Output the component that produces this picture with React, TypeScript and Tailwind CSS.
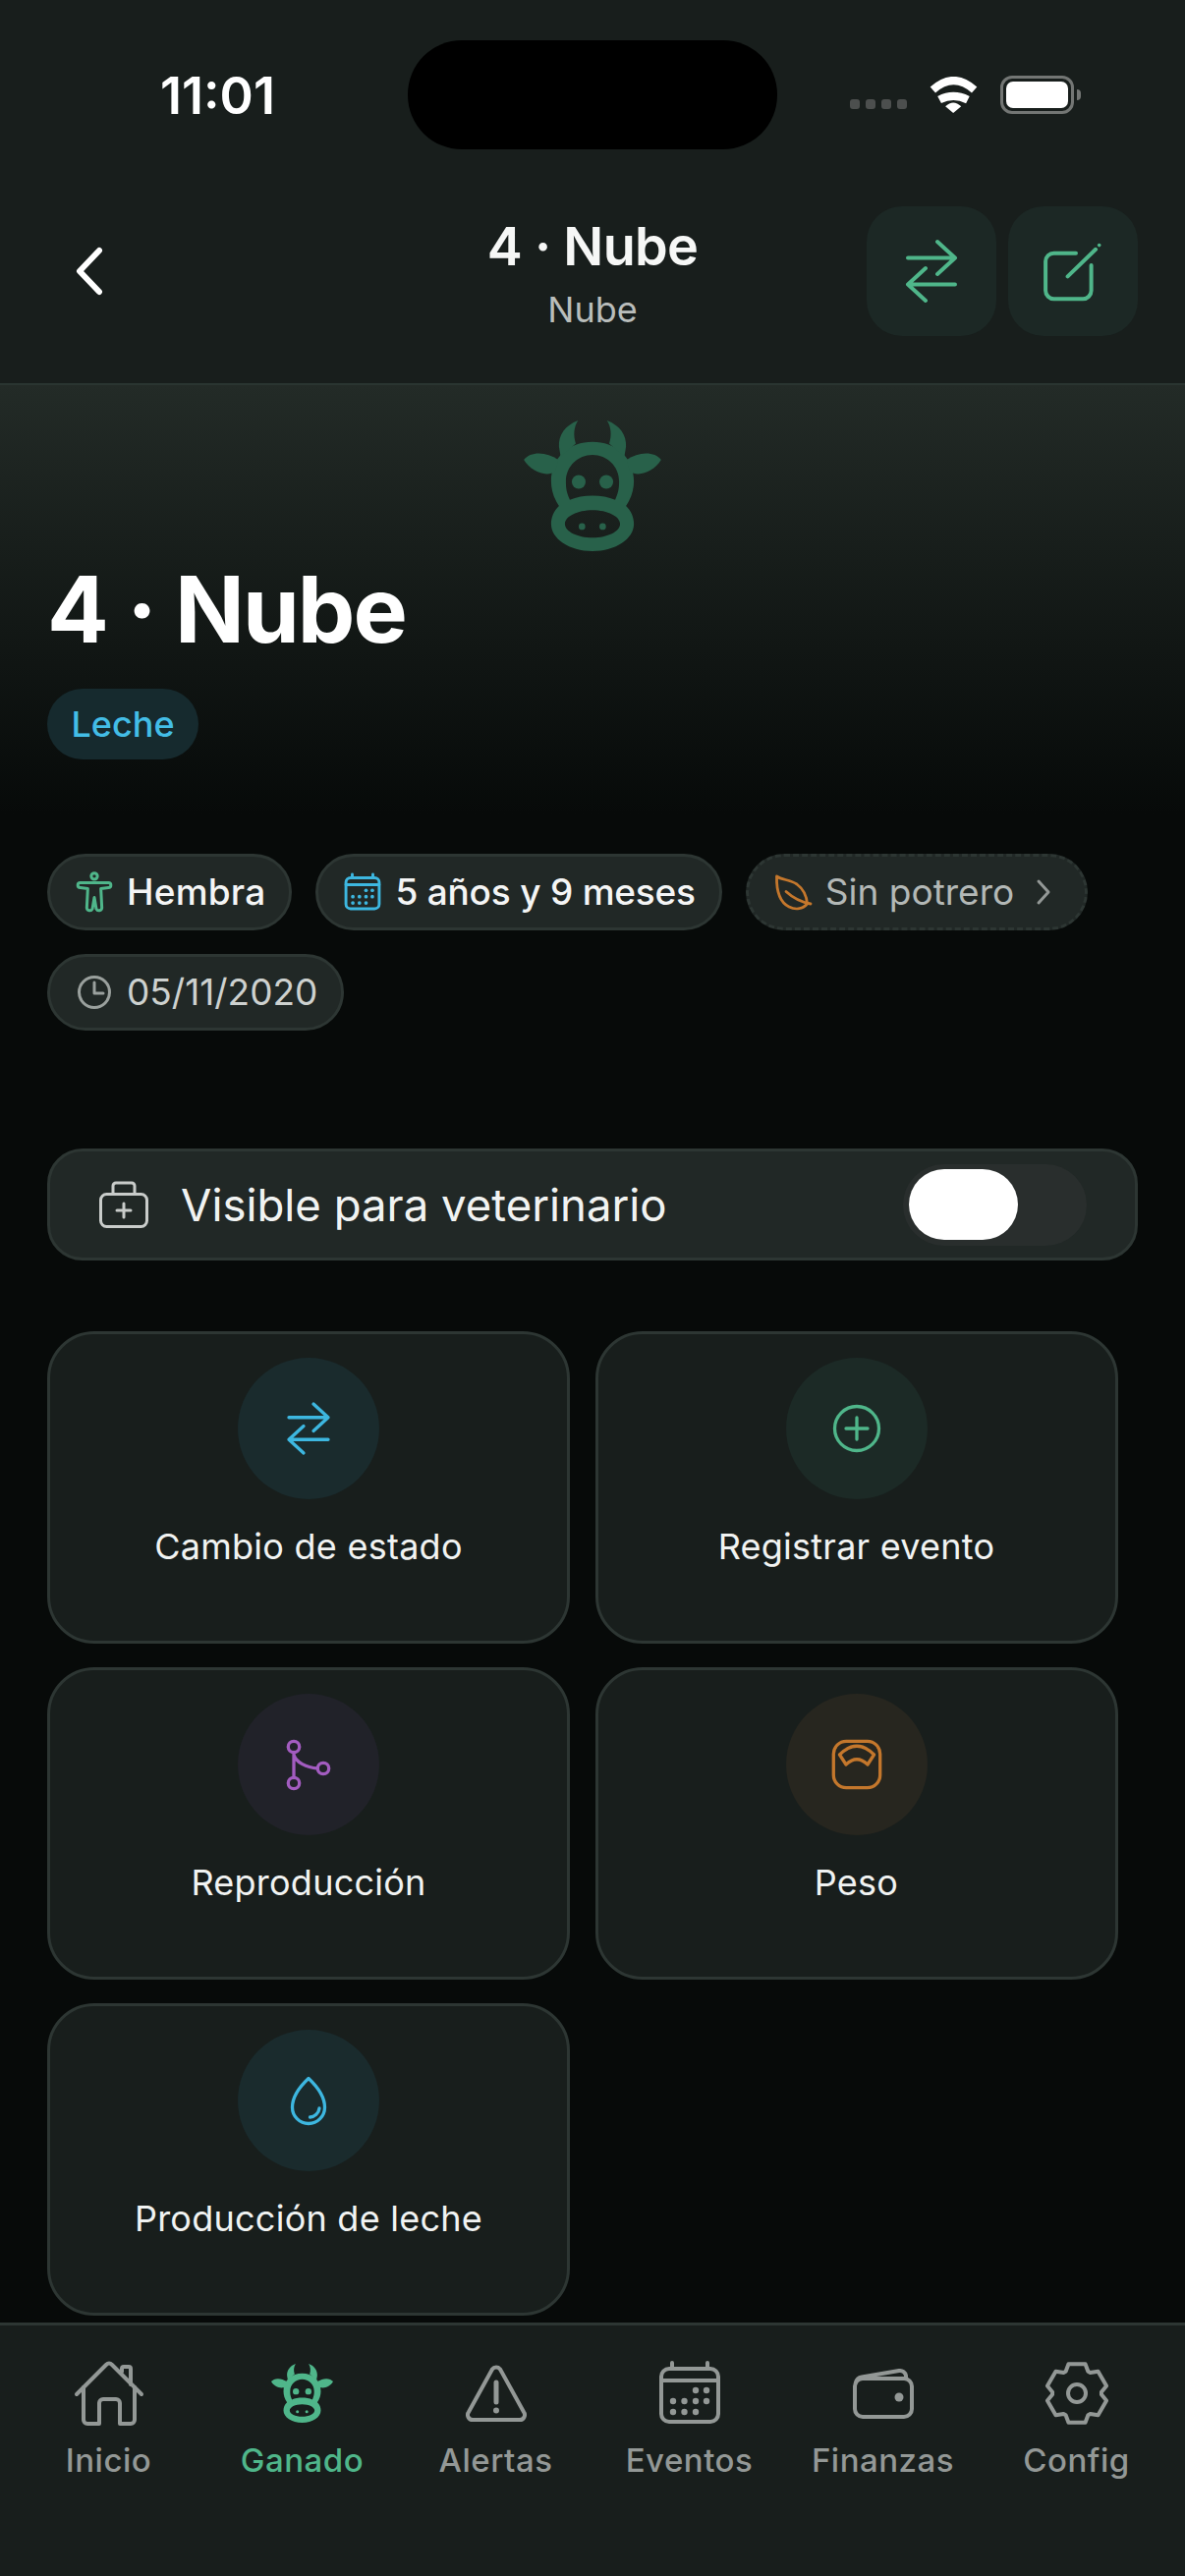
const green = '#4fb68a'
const blue = '#3db7e0'
const purple = '#a35cc0'
const orange = '#c4772c'
const gray = '#939896'

function Cow({ color, className }: { color: string; className: string }) {
  return (
    <svg viewBox="100 85 418 398" className={className} fill={color}>
      <path
        fillRule="evenodd"
        d="M207 345C190 320 183 295 183 270C183 195 240 150 309 150C378 150 435 195 435 270C435 295 428 320 411 345C427 360 435 380 435 400C435 445 380 483 309 483C238 483 183 445 183 400C183 380 191 360 207 345ZM240 327C228 300 228 285 228 270C228 225 265 190 309 190C353 190 390 225 390 270C390 285 390 300 378 327C340 310 278 310 240 327ZM225 400C225 423 263 442 309 442C355 442 393 423 393 400C393 377 355 358 309 358C263 358 225 377 225 400Z"
      />
      <circle cx="267" cy="272" r="21" />
      <circle cx="351" cy="272" r="21" />
      <circle cx="277" cy="408" r="10" />
      <circle cx="340" cy="408" r="10" />
      <path d="M265 85C225 100 205 130 207 165L212 195L258 155C250 130 252 105 265 85Z" />
      <path d="M353 85C393 100 413 130 411 165L406 195L360 155C368 130 366 105 353 85Z" />
      <path d="M205 205C170 180 120 178 100 205C120 240 170 260 195 240Z" />
      <path d="M413 205C448 180 498 178 518 205C498 240 448 260 423 240Z" />
    </svg>
  )
}

function Swap({ color, size, width }: { color: string; size: number; width: number }) {
  return (
    <svg viewBox="0 0 24 24" width={size} height={size} fill="none" stroke={color} strokeWidth={width} strokeLinecap="round" strokeLinejoin="round">
      <path d="M4 7.5h16M14 2l6 5.5-6 5.5M20 16.5H4M10 11l-6 5.5 6 5.5" />
    </svg>
  )
}

function CalendarIcon({ color, size, width }: { color: string; size: number; width: number }) {
  const dots = [
    [42, 33], [53, 33],
    [19, 44], [30.5, 44], [42, 44], [53, 44],
    [19, 55], [30.5, 55], [42, 55],
  ]
  return (
    <svg viewBox="0 0 72 72" width={size} height={size} fill="none" stroke={color} strokeWidth={width} strokeLinecap="round">
      <rect x="7" y="11" width="58" height="54" rx="8" />
      <path d="M7 23H65M18 5V10M54 5V10" />
      {dots.map(([x, y]) => (
        <circle key={`${x}-${y}`} cx={x} cy={y} r="3.2" fill={color} stroke="none" />
      ))}
    </svg>
  )
}

// six flat teeth around the centre of a 72 box
function gearPath() {
  const pt = (deg: number, r: number) => {
    const a = (deg * Math.PI) / 180
    return `${(36 + r * Math.cos(a)).toFixed(2)} ${(36 + r * Math.sin(a)).toFixed(2)}`
  }
  const parts: string[] = []
  for (let i = 0; i < 6; i++) {
    const a = -90 + 60 * i
    parts.push(pt(a - 27, 25), pt(a - 16, 31), pt(a + 16, 31), pt(a + 27, 25))
  }
  return `M${parts.join('L')}Z`
}

function NavIcon({ name }: { name: string }) {
  const props = {
    viewBox: '0 0 72 72',
    width: 72,
    height: 72,
    fill: 'none',
    stroke: gray,
    strokeWidth: 4,
    strokeLinecap: 'round' as const,
    strokeLinejoin: 'round' as const,
  }
  if (name === 'Inicio')
    return (
      <svg {...props}>
        <path d="M3 37L33 7Q36 4 39 7L69 37" />
        <path d="M10 30V63a4 4 0 0 0 4 4H26V46a4 4 0 0 1 4-4H43a4 4 0 0 1 4 4V67H58a4 4 0 0 0 4-4V30" />
        <path d="M49 14V11a2 2 0 0 1 2-2H56a2 2 0 0 1 2 2V27" />
      </svg>
    )
  if (name === 'Ganado')
    return (
      <div className="flex h-[72px] w-[72px] items-center justify-center">
        <Cow color={green} className="h-[60px] w-[63px]" />
      </div>
    )
  if (name === 'Alertas')
    return (
      <svg {...props}>
        <path d="M32 11.5a5 5 0 0 1 8 0L64 55a5 5 0 0 1-4 8H12a5 5 0 0 1-4-8Z" />
        <path d="M36 25V45" strokeWidth="5" />
        <circle cx="36" cy="53.5" r="3" fill={gray} stroke="none" />
      </svg>
    )
  if (name === 'Eventos') return <CalendarIcon color={gray} size={72} width={4} />
  if (name === 'Finanzas')
    return (
      <svg {...props}>
        <rect x="7" y="21" width="58" height="39" rx="8" />
        <path d="M8 25C9 21 11 20 14 19.5L52 13a6 6 0 0 1 7 5V21" />
        <circle cx="52" cy="40" r="4.5" fill={gray} stroke="none" />
      </svg>
    )
  return (
    <svg {...props}>
      <path d={gearPath()} />
      <circle cx="36" cy="36" r="9" />
    </svg>
  )
}

function Chip({ icon, label, textClass, dashed }: { icon: React.ReactNode; label: string; textClass: string; dashed?: boolean }) {
  return (
    <div
      className={`flex h-[78px] items-center gap-3 rounded-full border-[3px] border-[#2d3633] bg-[#212826] px-6 text-[37px] ${textClass} ${dashed ? 'border-dashed' : ''}`}
    >
      {icon}
      <span>{label}</span>
      {dashed && (
        <svg viewBox="0 0 36 36" width={36} height={36} fill="none" stroke={gray} strokeWidth="3" strokeLinecap="round" strokeLinejoin="round">
          <path d="M13 7L23 18L13 29" />
        </svg>
      )}
    </div>
  )
}

function ActionCard({ icon, label, circleClass }: { icon: React.ReactNode; label: string; circleClass: string }) {
  return (
    <div className="flex h-[318px] flex-col items-center rounded-[48px] border-[3px] border-[#2d3633] bg-[#181e1c] pt-6">
      <div className={`flex h-[144px] w-[144px] items-center justify-center rounded-full ${circleClass}`}>{icon}</div>
      <span className="mt-[25px] text-[36px] leading-[46px] font-normal tracking-[0.25px] text-[#f1f3f2]">{label}</span>
    </div>
  )
}

function CardSvg({ color, children }: { color: string; children: React.ReactNode }) {
  return (
    <svg viewBox="0 0 60 60" width={60} height={60} fill="none" stroke={color} strokeWidth="3.3" strokeLinecap="round" strokeLinejoin="round">
      {children}
    </svg>
  )
}

const navItems = ['Inicio', 'Ganado', 'Alertas', 'Eventos', 'Finanzas', 'Config']

export default function App() {
  return (
    <div className="flex h-[2622px] w-[1206px] flex-col overflow-hidden bg-[#070a09] [font-family:Inter,sans-serif]">
      {/* Header */}
      <header className="h-[392px] shrink-0 border-b-2 border-[#2a3531] bg-[#181e1c]">
        <div className="flex h-[111px] translate-y-[41px] items-center">
          <div className="w-[415px] pt-[2px] pl-7 text-center text-[52px] font-semibold text-white">11:01</div>
          <div className="h-[111px] w-[376px] rounded-[55px] bg-black" />
          <div className="flex items-center gap-[22px] pl-[74px]">
            <div className="mt-[19px] flex gap-[6px]">
              <div className="h-[10px] w-[10px] rounded-[3px] bg-[#4c4f4e]" />
              <div className="h-[10px] w-[10px] rounded-[3px] bg-[#4c4f4e]" />
              <div className="h-[10px] w-[10px] rounded-[3px] bg-[#4c4f4e]" />
              <div className="h-[10px] w-[10px] rounded-[3px] bg-[#4c4f4e]" />
            </div>
            <svg viewBox="315 118 152 110" width={51} height={37} fill="none" stroke="#fff">
              <path d="M328 158Q391 102 454 158" strokeWidth="24" />
              <path d="M348 188Q390 166 434 188" strokeWidth="24" />
              <path d="M366 208Q390 185 414 208L390 228Z" fill="#fff" stroke="none" />
            </svg>
            <div className="flex items-center gap-[3px]">
              <div className="flex h-[39px] w-[75px] items-center rounded-[12px] border-[3px] border-[#737674] p-[3px]">
                <div className="h-full w-full rounded-[7px] bg-white" />
              </div>
              <div className="h-[11px] w-[4px] rounded-r-full bg-[#737674]" />
            </div>
          </div>
        </div>
        <div className="mt-[99px] grid h-[132px] grid-cols-[1fr_auto_1fr] items-center px-12">
          <svg viewBox="0 0 36 54" width={36} height={54} fill="none" stroke="#fff" strokeWidth="6" strokeLinecap="round" strokeLinejoin="round" className="ml-[27px]">
            <path d="M26 6L6 27L26 48" />
          </svg>
          <div className="flex flex-col items-center pt-[3px]">
            <span className="text-[54px] leading-[64px] font-semibold tracking-[-0.7px] text-[#f6f7f6]">4 · Nube</span>
            <span className="mt-[10px] text-[36px] leading-[44px] text-[#b9bdbb]">Nube</span>
          </div>
          <div className="flex justify-end gap-3">
            <div className="flex h-[132px] w-[132px] items-center justify-center rounded-[36px] bg-[#1c2825]">
              <Swap color={green} size={72} width={1.33} />
            </div>
            <div className="flex h-[132px] w-[132px] items-center justify-center rounded-[36px] bg-[#1c2825]">
              <svg viewBox="0 0 24 24" width={72} height={72} fill="none" stroke={green} strokeWidth="1.33" strokeLinecap="round" strokeLinejoin="round">
                <path d="M13 5.9H5.5a2.8 2.8 0 0 0-2.8 2.8v9.9a2.8 2.8 0 0 0 2.8 2.8h9.9a2.8 2.8 0 0 0 2.8-2.8V10" />
                <path d="M10.2 13.8L19.7 4.6" />
                <circle cx="20.9" cy="3.2" r=".6" fill={green} stroke="none" />
              </svg>
            </div>
          </div>
        </div>
      </header>

      <main className="min-h-0 flex-1 overflow-hidden">
        {/* Hero */}
        <section className="h-[438px] bg-gradient-to-b from-[#232b27] to-[#070a09] px-12 pt-9">
          <div className="flex justify-center">
            <Cow color="#28614a" className="h-[133px] w-[140px]" />
          </div>
          <h1 className="mt-[9px] text-[93px] leading-[100px] font-bold tracking-[-2px] text-white">4 · Nube</h1>
          <div className="mt-[31px] flex h-[72px] w-[154px] items-center justify-center rounded-full bg-[#162a2e] text-[36px] font-medium text-[#43bde6]">
            Leche
          </div>
        </section>

        <section className="mt-[39px] flex flex-wrap gap-x-6 gap-y-6 px-12">
          <Chip
            label="Hembra"
            textClass="font-medium tracking-[0.2px] text-[#f4f5f5]"
            icon={
              <svg viewBox="135 111 126 128" width={42} height={43} fill="none" stroke={green} strokeWidth="9" strokeLinecap="round" strokeLinejoin="round">
                <circle cx="198" cy="125" r="9.5" />
                <path d="M155 145H241a7.5 7.5 0 0 1 0 15L218 163L221 222a9 9 0 0 1-17 3L198 190L192 225a9 9 0 0 1-17-3L178 163L155 160a7.5 7.5 0 0 1 0-15Z" />
              </svg>
            }
          />
          <Chip
            label="5 años y 9 meses"
            textClass="font-medium tracking-[-0.2px] text-[#f4f5f5]"
            icon={<CalendarIcon color={blue} size={42} width={5} />}
          />
          <Chip
            dashed
            label="Sin potrero"
            textClass="text-[#b3b8b6]"
            icon={
              <svg viewBox="0 0 42 42" width={42} height={42} fill="none" stroke={orange} strokeWidth="2.8" strokeLinecap="round" strokeLinejoin="round">
                <path d="M4.5 5C10 9 18 8 25 13C31 17.5 35 25 35.5 33C31 38 24 39.5 17 36C9 32 4 24 4.5 5Z" />
                <path d="M14 20.5C20 26 28 31 39 33" />
              </svg>
            }
          />
          <Chip
            label="05/11/2020"
            textClass="text-[#cdd1cf]"
            icon={
              <svg viewBox="0 0 42 42" width={42} height={42} fill="none" stroke="#9aa09d" strokeWidth="3" strokeLinecap="round" strokeLinejoin="round">
                <circle cx="21" cy="21" r="15.5" />
                <path d="M21 11V22H30" />
              </svg>
            }
          />
        </section>

        {/* Toggle */}
        <section className="mx-12 mt-[120px] flex h-[114px] items-center justify-between rounded-[36px] border-[3px] border-[#2d3633] bg-[#212826] pr-[49px] pl-12">
          <div className="flex items-center gap-[31px]">
            <svg viewBox="0 0 54 54" width={54} height={54} fill="none" stroke="#c9ccca" strokeWidth="3" strokeLinecap="round" strokeLinejoin="round">
              <rect x="3.5" y="16.5" width="47" height="33" rx="6" />
              <path d="M16 16V8a3 3 0 0 1 3-3H35a3 3 0 0 1 3 3V16M27 26V40M20 33H34" />
            </svg>
            <span className="pt-[2px] text-[45.5px] text-[#f1f3f2]">Visible para veterinario</span>
          </div>
          <div className="flex h-[83px] w-[187px] items-center rounded-full bg-[#292e2d] pl-[6px]">
            <div className="h-[72px] w-[111px] rounded-full bg-white" />
          </div>
        </section>

        {/* Actions */}
        <section className="mt-[72px] grid grid-cols-[532px_532px] gap-x-[25.5px] gap-y-6 px-12">
          <ActionCard label="Cambio de estado" circleClass="bg-[#1a2b2d]" icon={<Swap color={blue} size={60} width={1.33} />} />
          <ActionCard
            label="Registrar evento"
            circleClass="bg-[#1c2a26]"
            icon={
              <CardSvg color={green}>
                <circle cx="30" cy="30" r="22.5" />
                <path d="M30 19V41M19 30H41" />
              </CardSvg>
            }
          />
          <ActionCard
            label="Reproducción"
            circleClass="bg-[#212229]"
            icon={
              <CardSvg color={purple}>
                <circle cx="15" cy="12" r="5.7" />
                <circle cx="15" cy="49" r="5.7" />
                <circle cx="45" cy="34" r="5.7" />
                <path d="M15 17.5V43.5M15 20C17 28 28 33 39.5 34" />
              </CardSvg>
            }
          />
          <ActionCard
            label="Peso"
            circleClass="bg-[#27261f]"
            icon={
              <CardSvg color={orange}>
                <rect x="6.3" y="6.3" width="47.4" height="47.4" rx="13" />
                <path d="M12.5 20Q30 2.6 47.5 20L41 30Q30 19.5 19 30Z" />
              </CardSvg>
            }
          />
          <ActionCard
            label="Producción de leche"
            circleClass="bg-[#1a2b2d]"
            icon={
              <CardSvg color={blue}>
                <path d="M30 7.5C22 15 13.5 25 13.5 37a16.5 16.5 0 0 0 33 0C46.5 25 38 15 30 7.5Z" />
                <path d="M41 38C40.5 43 36 46.5 31.5 47" />
              </CardSvg>
            }
          />
        </section>
      </main>

      {/* Bottom nav */}
      <nav className="grid h-[258px] shrink-0 grid-cols-6 border-t-[3px] border-[#2d3633] bg-[#181e1c] px-3 pt-[33px]">
        {navItems.map((item) => (
          <div key={item} className="flex flex-col items-center">
            <NavIcon name={item} />
            <span className={`mt-3 text-[33px] leading-[40px] font-medium tracking-[0.5px] ${item === 'Ganado' ? 'text-[#4fb68a]' : 'text-[#939896]'}`}>
              {item}
            </span>
          </div>
        ))}
      </nav>
    </div>
  )
}
